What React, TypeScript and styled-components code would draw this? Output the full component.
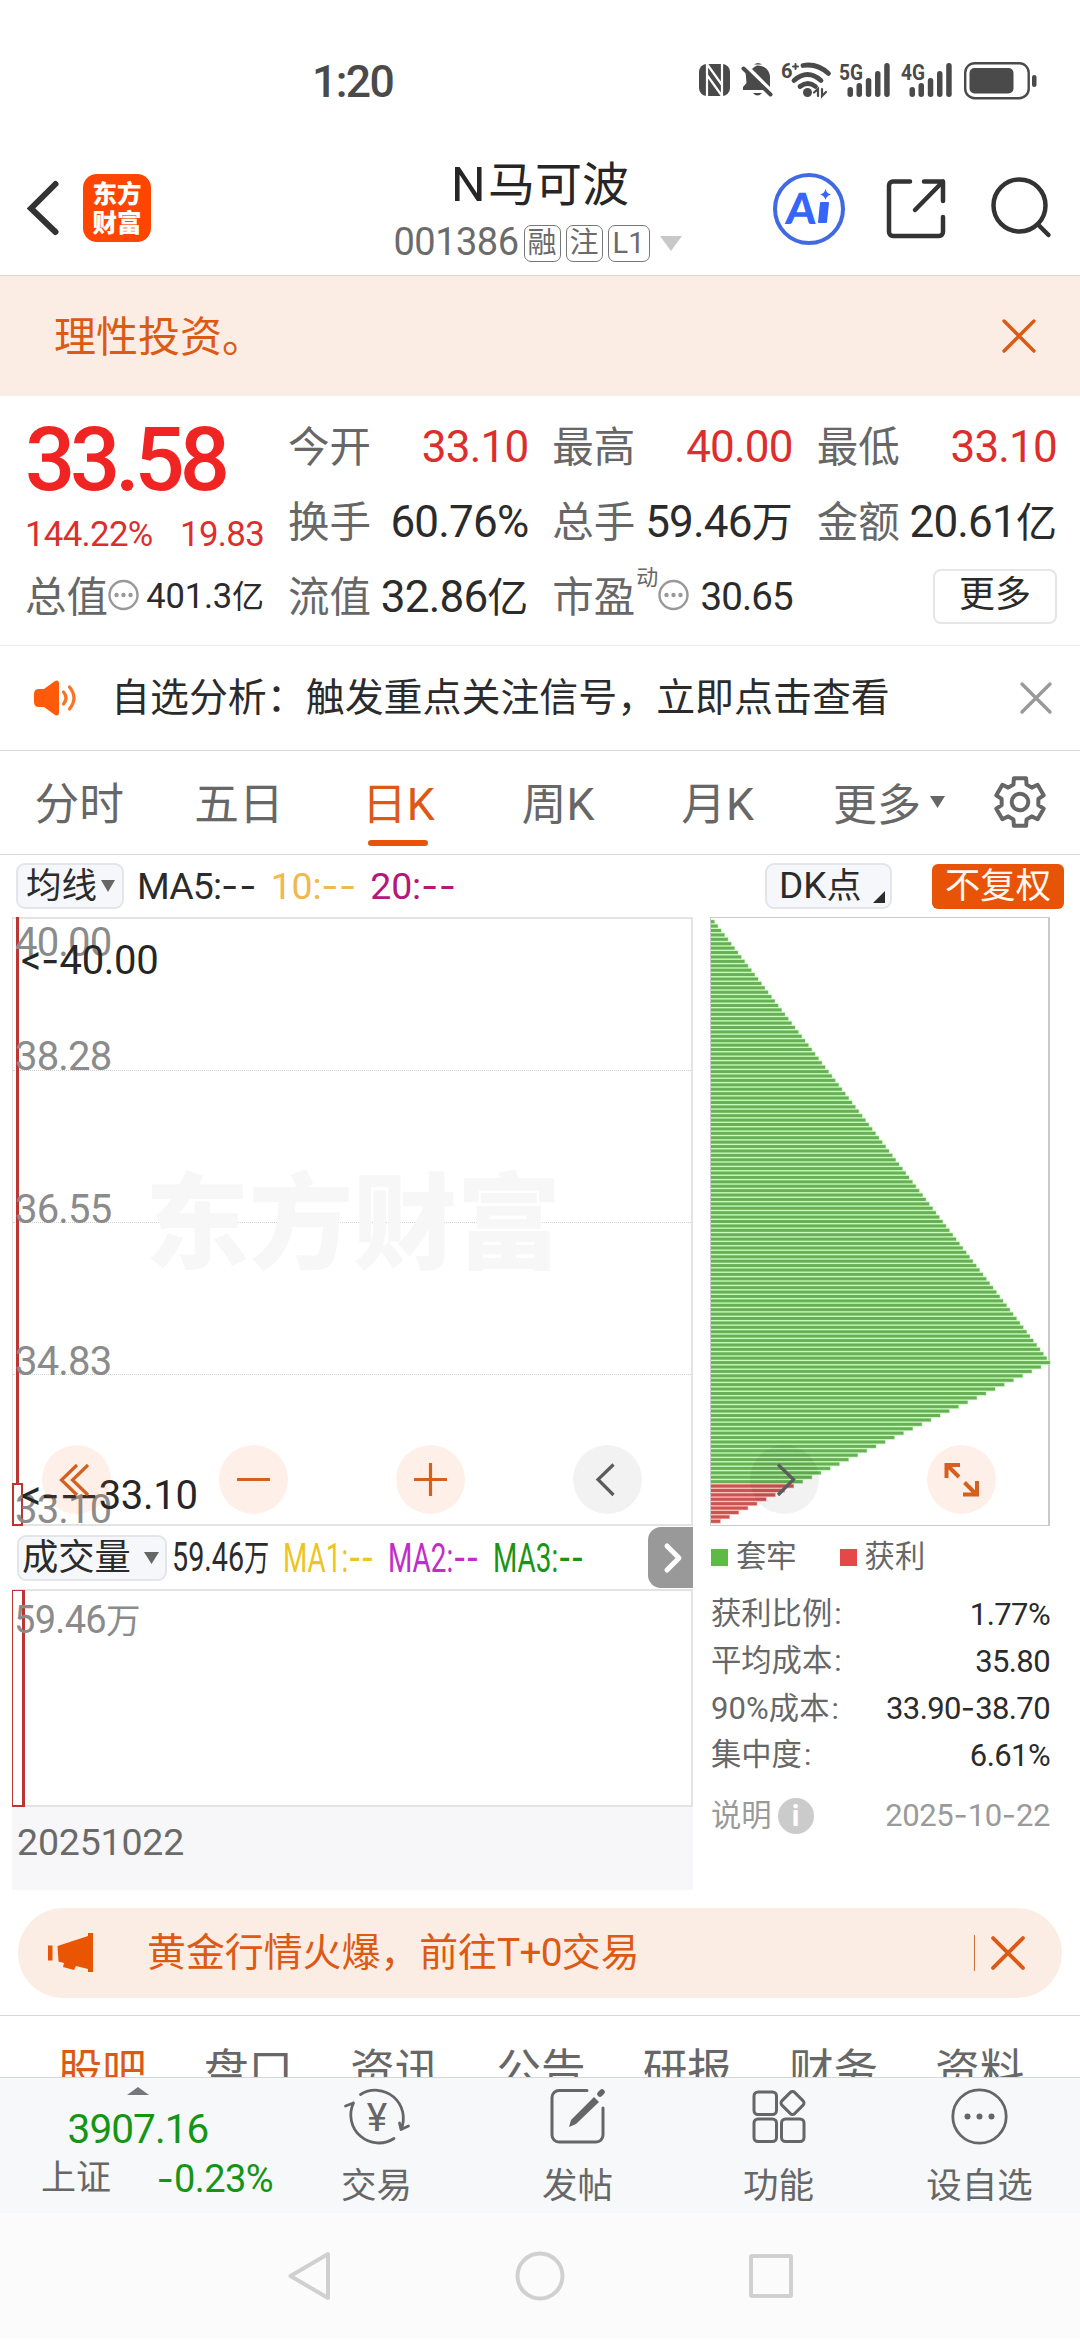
import React from "react";
import styled, { createGlobalStyle, css } from "styled-components";

const GlobalStyle = createGlobalStyle`
  * { box-sizing: border-box; }
  body {
    margin: 0;
    background: #fff;
    font-family: Roboto, "Noto Sans CJK SC", sans-serif;
    -webkit-font-smoothing: antialiased;
  }
  svg { display: block; flex: none; overflow: visible; }
`;

const c = {
  ink: "#2b2b2b",
  label: "#676767",
  red: "#dc2f2d",
  orange: "#dc5a14",
  green: "#149514",
  rule: "#d6d7d9",
  tint: "#fcede4",
};

/* ---------- primitives ---------- */

const Text = styled.span<{ $size: number; $color?: string; $ls?: number; $weight?: number; $ml?: number }>`
  font-size: ${(p) => p.$size}px;
  line-height: 1.2;
  color: ${(p) => p.$color ?? "inherit"};
  letter-spacing: ${(p) => p.$ls ?? 0}px;
  font-weight: ${(p) => p.$weight ?? 400};
  margin-left: ${(p) => p.$ml ?? 0}px;
  white-space: nowrap;
`;

const Dash = styled.span<{ $ls?: number }>`
  font-family: Inter, sans-serif;
  letter-spacing: ${(p) => p.$ls ?? 0}px;
`;

const Unit = styled.span<{ $size: number }>`
  font-size: ${(p) => p.$size}px;
  letter-spacing: 0;
`;

const Tight = styled.span<{ $ls: number }>`
  letter-spacing: ${(p) => p.$ls}px;
`;

const Page = styled.div`
  width: 1080px;
  height: 2340px;
  display: flex;
  flex-direction: column;
  overflow: hidden;
  background: #fff;
`;

/* ---------- status bar ---------- */

const StatusBar = styled.div`
  height: 132px;
  display: flex;
  align-items: flex-start;
  justify-content: space-between;
  padding: 56px 43px 0 312px;
  color: #4a4a4a;
`;

const StatusIcons = styled.div`
  display: flex;
  padding-top: 5px;
`;

/* ---------- header ---------- */

const Header = styled.header`
  height: 144px;
  display: grid;
  grid-template-columns: 300px 1fr 300px;
  border-bottom: 1px solid ${c.rule};
`;

const HeaderLeft = styled.div`
  display: flex;
  align-items: flex-start;
  padding: 42px 0 0 27px;
  gap: 23px;
`;

const BackButton = styled.div`
  padding-top: 6px;
`;

const Logo = styled.div`
  width: 68px;
  height: 68px;
  border-radius: 14px;
  background: #ff4500;
  color: #fff;
  font: 900 24.5px/29px "Noto Sans CJK SC", sans-serif;
  text-align: center;
  padding-top: 4px;
`;

const TitleBlock = styled.div`
  display: flex;
  flex-direction: column;
  align-items: center;
  padding-top: 24px;
`;

const Title = styled.div`
  height: 58px;
  line-height: 58px;
  font-size: 47px;
  color: #262626;
  white-space: nowrap;
`;

const CodeRow = styled.div`
  display: flex;
  align-items: center;
  height: 38px;
  margin-top: 10px;
  margin-right: 5px;
`;

const Badge = styled.span<{ $w: number }>`
  width: ${(p) => p.$w}px;
  height: 37px;
  margin-left: 5px;
  border: 1.5px solid #777;
  border-radius: 7px;
  color: #6b6b6b;
  font-size: 29px;
  line-height: 35px;
  text-align: center;
`;

const HeaderRight = styled.div`
  display: flex;
  justify-content: flex-end;
  padding: 41px 29px 0 0;
`;

const AiBadge = styled.div`
  flex: none;
  width: 72px;
  height: 72px;
  border: 4px solid #4169e1;
  border-radius: 50%;
  color: #3565fb;
  font: 900 43px/62px Lato, sans-serif;
  display: flex;
  padding-left: 9px;
  margin-right: 42px;
`;

const Slanted = styled.span<{ $deg: number }>`
  display: inline-block;
  transform: skewX(${(p) => p.$deg}deg);
`;

const IStem = styled.span`
  display: flex;
  flex-direction: column;
  align-items: center;
  width: 12px;
  margin: 12px 0 0 3px;
`;

const IBody = styled.i`
  width: 9px;
  height: 21px;
  margin: 2px 4px 0 0;
  border-radius: 1px;
  background: #3565fb;
  transform: skewX(-6deg);
`;

/* ---------- notices ---------- */

const RiskNotice = styled.div`
  height: 120px;
  display: flex;
  align-items: center;
  justify-content: space-between;
  padding: 0 45px 0 54px;
  background: ${c.tint};
`;

const RiskText = styled.span`
  padding-top: 3px;
  font-size: 42px;
  line-height: 50px;
  color: ${c.orange};
`;

const AnalysisNotice = styled.div`
  height: 105px;
  display: flex;
  align-items: center;
  padding: 0 29px 0 33px;
  border-bottom: 1px solid ${c.rule};
`;

const Grow = styled.div<{ $ml?: number }>`
  flex: 1;
  display: flex;
  margin-left: ${(p) => p.$ml ?? 0}px;
`;

/* ---------- quote ---------- */

const Quote = styled.section`
  height: 250px;
  display: grid;
  grid-template-columns: 239px 1fr;
  column-gap: 24px;
  padding: 13px 23px 0 25px;
  border-bottom: 1px solid #ececec;
`;

const QuoteLeft = styled.div`
  display: flex;
  flex-direction: column;
`;

const Price = styled.div`
  height: 98px;
  font-size: 88.5px;
  line-height: 102px;
  font-weight: 500;
  letter-spacing: -5.2px;
  color: #f12424;
  white-space: nowrap;
`;

const Change = styled.div`
  height: 52px;
  display: flex;
  align-items: center;
  justify-content: space-between;
  padding-top: 3px;
  color: ${c.red};
`;

const QuoteGrid = styled.div`
  display: grid;
  grid-template-columns: repeat(3, 1fr);
  grid-auto-rows: 75px;
  column-gap: 24px;
`;

const Cell = styled.div`
  height: 75px;
  display: flex;
  align-items: center;
  justify-content: space-between;
  padding-top: 1px;
`;

const CellLabel = styled.span`
  display: flex;
  align-items: center;
  padding-top: 2px;
  font-size: 41.5px;
  line-height: 72px;
  color: ${c.label};
  white-space: nowrap;
`;

const Sup = styled.span`
  font-size: 22px;
  line-height: 22px;
  margin: -40px 0 0 1px;
`;

const MoreButton = styled.button`
  width: 124px;
  height: 55px;
  margin: -2px 0 0 auto;
  padding: 0 0 2px;
  border: 2px solid #e6e6e6;
  border-radius: 8px;
  background: #fff;
  font: 36px/44px Roboto, "Noto Sans CJK SC", sans-serif;
  color: ${c.ink};
`;

/* ---------- period tabs ---------- */

const PeriodTabs = styled.nav`
  height: 104px;
  display: flex;
  border-bottom: 1px solid ${c.rule};
`;

const PeriodTab = styled.div<{ $active?: boolean }>`
  width: 159.6px;
  display: flex;
  flex-direction: column;
  align-items: center;
  padding: 22px 1px 0 0;
  font-size: 44.7px;
  line-height: 64px;
  color: ${(p) => (p.$active ? c.orange : c.label)};
  white-space: nowrap;
  ${(p) =>
    p.$active &&
    css`
      &::after {
        content: "";
        width: 60px;
        height: 6px;
        margin-top: 3px;
        border-radius: 3px;
        background: #e85407;
      }
    `}
`;

const MoreTab = styled.div`
  display: flex;
  align-items: center;
  gap: 9px;
  height: 102px;
  padding-left: 35px;
  font-size: 44px;
  color: ${c.label};
`;

const GearSlot = styled.div`
  margin: 25px 0 0 49px;
`;

/* ---------- indicator bars ---------- */

const IndicatorBar = styled.div`
  height: 62px;
  display: flex;
  align-items: center;
  padding: 0 16px;
  color: ${c.ink};
`;

const Pill = styled.div<{ $w: number; $pl: number }>`
  width: ${(p) => p.$w}px;
  height: 46px;
  flex: none;
  display: flex;
  align-items: center;
  padding-left: ${(p) => p.$pl}px;
  border: 2px solid #e2e5ea;
  border-radius: 9px;
  background: #f6f7fa;
  color: ${c.ink};
`;

const SolidPill = styled.div`
  width: 132px;
  height: 45px;
  margin-left: 40px;
  border-radius: 6px;
  background: #e85407;
  color: #fff8f2;
  font-size: 35.3px;
  line-height: 45px;
  text-align: center;
`;

/* ---------- charts ---------- */

const Charts = styled.section`
  position: relative;
  height: 973px;
  display: flex;
  padding-left: 12px;
  gap: 17px;
`;

const ChartColumn = styled.div`
  width: 681px;
  display: flex;
  flex-direction: column;
`;

const CandleChart = styled.div`
  position: relative;
  height: 609px;
  flex: none;
  border: 2px solid #e3e3e3;
  border-left-width: 1px;
`;

const AxisLabel = styled.span<{ $y: number; $x?: number; $dark?: boolean }>`
  position: absolute;
  left: ${(p) => p.$x ?? 2}px;
  top: ${(p) => p.$y}px;
  font-size: 40px;
  line-height: 48px;
  letter-spacing: ${(p) => (p.$dark ? -0.3 : -0.8)}px;
  color: ${(p) => (p.$dark ? "#262626" : "#8b8b8b")};
  white-space: nowrap;
`;

const GridLine = styled.div<{ $y: number }>`
  position: absolute;
  left: 0;
  right: 0;
  top: ${(p) => p.$y}px;
  border-top: 1px dotted #d2d2d2;
`;

const Watermark = styled.div`
  position: absolute;
  left: 132px;
  top: 222px;
  font: 900 104px/150px "Noto Sans CJK SC", sans-serif;
  color: #f7f7f7;
  white-space: nowrap;
`;

const Wick = styled.div`
  position: absolute;
  left: 3px;
  top: -2px;
  width: 2.5px;
  height: 567px;
  background: #bd3531;
`;

const CandleBody = styled.div`
  position: absolute;
  left: -1px;
  bottom: -2px;
  width: 11px;
  height: 43px;
  border: 2px solid #bd3531;
`;

const VolumeBar = styled.div`
  height: 63px;
  flex: none;
  display: flex;
  align-items: center;
  padding-left: 5px;
`;

const Narrow = styled.div<{ $w: number; $ml: number; $color: string; $scale?: number }>`
  width: ${(p) => p.$w}px;
  margin-left: ${(p) => p.$ml}px;
  font-size: 41px;
  line-height: 50px;
  color: ${(p) => p.$color};
  white-space: nowrap;
  transform: scaleX(${(p) => p.$scale ?? 0.68});
  transform-origin: left center;
`;

const Expander = styled.div`
  width: 45px;
  height: 61px;
  margin-left: auto;
  display: flex;
  align-items: center;
  padding-left: 17px;
  border-radius: 13px 0 0 13px;
  background: #999;
`;

const VolumeChart = styled.div`
  position: relative;
  height: 218px;
  flex: none;
  border: 2px solid #e3e3e3;
  border-left-width: 1px;
`;

const VolumeColumn = styled.div`
  position: absolute;
  left: -1px;
  top: -1px;
  width: 13px;
  height: 217px;
  border: solid #bd3531;
  border-width: 1px 3px 2px 1.5px;
`;

const DateStrip = styled.div`
  height: 83px;
  padding: 13px 0 0 5px;
  background: #f7f7f9;
  color: #6a6a6a;
`;

const ChipColumn = styled.div`
  width: 340px;
  display: flex;
  flex-direction: column;
`;

const ChipChart = styled.div`
  height: 609px;
  border: 2px solid #cacaca;
  border-width: 1px 2px 1px 1px;
`;

const Legend = styled.div`
  display: flex;
  align-items: center;
  height: 60px;
  padding: 2px 0 0 1px;
  color: ${c.label};
`;

const Swatch = styled.i<{ $color: string; $ml?: number }>`
  width: 17px;
  height: 17px;
  margin: 0 8px 0 ${(p) => p.$ml ?? 0}px;
  background: ${(p) => p.$color};
`;

const StatRow = styled.div<{ $muted?: boolean }>`
  height: 47px;
  display: flex;
  align-items: center;
  justify-content: space-between;
  margin-top: ${(p) => (p.$muted ? 13 : 0)}px;
  padding-left: 1px;
  font-size: 30.3px;
  line-height: 36px;
  color: ${(p) => (p.$muted ? "#9a9a9a" : c.label)};
  white-space: nowrap;
`;

const InfoLabel = styled.span`
  display: flex;
  align-items: center;
  gap: 6px;
`;

const InfoDot = styled.span`
  width: 36px;
  height: 36px;
  border-radius: 50%;
  background: #cbcbcb;
  color: #fff;
  font: 700 29px/36px Roboto, sans-serif;
  text-align: center;
`;

const Stats = styled.div`
  padding-top: 5px;
`;

const ChartControls = styled.div`
  position: absolute;
  left: 42px;
  top: 528px;
  display: flex;
  gap: 108.1px;
`;

const RoundButton = styled.div<{ $grey?: boolean }>`
  width: 69px;
  height: 69px;
  border-radius: 50%;
  background: ${(p) => (p.$grey ? "rgba(0,0,0,0.05)" : "rgba(246,106,30,0.1)")};
`;

/* ---------- promo + sections ---------- */

const Promo = styled.div`
  height: 90px;
  margin: 18px 18px 17px;
  display: flex;
  align-items: center;
  padding: 0 38px 0 30px;
  border-radius: 45px;
  background: ${c.tint};
`;

const PromoDivider = styled.i`
  width: 1.5px;
  height: 36px;
  margin-right: 17px;
  background: #c9713f;
`;

const SectionTabs = styled.nav`
  height: 62px;
  display: flex;
  overflow: hidden;
  padding: 0 27px 0 29px;
  border-top: 1px solid ${c.rule};
`;

const SectionTab = styled.div<{ $active?: boolean }>`
  flex: 1;
  padding-top: 25px;
  font-size: 44.5px;
  line-height: 60px;
  text-align: center;
  white-space: nowrap;
  color: ${(p) => (p.$active ? c.orange : c.label)};
`;

/* ---------- bottom bars ---------- */

const BottomBar = styled.footer`
  height: 136px;
  display: flex;
  border-top: 1px solid ${c.rule};
  background: #f6f8fa;
`;

const IndexBlock = styled.div`
  width: 276px;
  display: flex;
  flex-direction: column;
  align-items: center;
  padding-top: 9px;
`;

const IndexValue = styled.div`
  margin-top: 10px;
  height: 50px;
  line-height: 49px;
  font-size: 40.5px;
  letter-spacing: -0.9px;
  color: ${c.green};
`;

const IndexRow = styled.div`
  width: 100%;
  display: flex;
  justify-content: space-between;
  align-items: center;
  height: 48px;
  padding: 0 3px 0 41px;
`;

const BottomItem = styled.div`
  flex: 1;
  display: flex;
  flex-direction: column;
  align-items: center;
  padding-top: 10px;
  gap: 17px;
  color: ${c.label};
`;

const SystemNav = styled.div`
  height: 126px;
  display: flex;
  justify-content: center;
  align-items: center;
  gap: 184px;
  background: #fbfbfb;
`;

/* ---------- icons ---------- */

const S = "#4a4a4a";

const Signal = ({ label }: { label: string }) => (
  <svg width="51" height="36" viewBox="0 0 51 36" fill={S}>
    <text x="-1" y="19" fontSize="22.500" fontWeight="700" textLength="24" lengthAdjust="spacingAndGlyphs">
      {label}
    </text>
    <rect x="7.500" y="26" width="5.500" height="10" rx="2.700" />
    <rect x="16.500" y="22" width="5.500" height="14" rx="2.700" />
    <rect x="25.800" y="17" width="5.500" height="19" rx="2.700" />
    <rect x="35" y="10" width="5.500" height="26" rx="2.700" />
    <rect x="44.200" y="2" width="5.500" height="34" rx="2.700" />
  </svg>
);

const StatusGlyphs = () => (
  <StatusIcons>
    <svg width="43" height="37" viewBox="0 0 43 37">
      <rect x="0" y="3" width="31" height="32" rx="8" fill={S} />
      <path d="M8 35V3l15 21V9M23 3v32L8 14v15" fill="none" stroke="#fff" strokeWidth="2.200" />
    </svg>
    <svg width="39" height="37" viewBox="0 0 39 37">
      <path d="M15 4.500a12 12 0 0 1 13 11V26l-18-18a11 11 0 0 1 5-3.500z" fill={S} />
      <path d="M3.500 10.500L22 29H1v-3l3.500-4z" fill={S} />
      <path d="M12 3.500q4-3 8 0z" fill={S} />
      <path d="M1.500 7.500l27 26" stroke={S} strokeWidth="4" strokeLinecap="round" />
      <path d="M11 32h9q-4.500 5-9 0z" fill={S} />
    </svg>
    <svg width="59" height="37" viewBox="0 0 59 37" fill="none" stroke={S} strokeLinecap="round">
      <text x="0" y="17" fontSize="20" fontWeight="700" fill={S} stroke="none">6</text>
      <path d="M12 5.500h5M14.500 3v5" strokeWidth="2" />
      <path d="M22 4.500q14-2.500 25.500 8M13 19.500q13.500-12 27 0M19 25.500q8-6 15.500 0" strokeWidth="4.800" />
      <circle cx="26.500" cy="31.500" r="4.500" fill={S} stroke="none" />
      <path d="M37 35v-7l-4 3.500M41 28v7l4-4" strokeWidth="2.200" />
    </svg>
    <Signal label="5G" />
    <svg width="11" height="1" />
    <Signal label="4G" />
    <svg width="11" height="1" />
    <svg width="73" height="40" viewBox="0 0 73 40">
      <rect x="1.200" y="2.200" width="63.500" height="35" rx="9.500" fill="none" stroke={S} strokeWidth="2.400" />
      <rect x="5.500" y="7" width="44" height="25.500" rx="5" fill={S} />
      <rect x="68" y="14" width="4.500" height="12" rx="2.200" fill={S} />
    </svg>
  </StatusIcons>
);

const Cross = ({ size, color, width }: { size: number; color: string; width: number }) => (
  <svg width={size} height={size} viewBox="0 0 30 30" stroke={color} strokeWidth={width} strokeLinecap="round">
    <path d="M1 1L29 29M29 1L1 29" />
  </svg>
);

const Down = ({ w, h, color = "#666" }: { w: number; h: number; color?: string }) => (
  <svg width={w} height={h} viewBox="0 0 10 10" preserveAspectRatio="none">
    <path d="M0 0h10L5 10z" fill={color} />
  </svg>
);

const Dots = () => (
  <svg width="31" height="31" viewBox="0 0 31 31">
    <circle cx="15.500" cy="12" r="14" fill="none" stroke="#999" strokeWidth="2.400" />
    <g fill="#999">
      <circle cx="8.500" cy="12" r="2.200" />
      <circle cx="15.500" cy="12" r="2.200" />
      <circle cx="22.500" cy="12" r="2.200" />
    </g>
  </svg>
);

const gearPath = (() => {
  const pts: string[] = [];
  for (let i = 0; i < 6; i++) {
    const a = (i * 60 - 90) * (Math.PI / 180);
    [
      [-0.36, 18.6],
      [-0.25, 24.6],
      [0.25, 24.6],
      [0.36, 18.6],
    ].forEach(([d, r]) => {
      pts.push(`${(26 + r * Math.cos(a + d)).toFixed(2)} ${(26 + r * Math.sin(a + d)).toFixed(2)}`);
    });
  }
  return `M${pts.join("L")}Z`;
})();

const Gear = () => (
  <svg width="52" height="52" viewBox="0 0 52 52" fill="none" stroke="#666" strokeWidth="4" strokeLinejoin="round">
    <path d={gearPath} />
    <circle cx="26" cy="26" r="8.300" />
  </svg>
);

/* Chip distribution: green rows are trapped holders, red rows are in profit. */
const ROWS = 137;
const PEAK = 100;
const FIRST_RED = 128;
const PITCH = 4.409;
const chipWidth = (i: number) =>
  i <= PEAK ? ((i + 1) * 339) / (PEAK + 1) : ((ROWS - i) * 339) / (ROWS - PEAK);

const ChipBars = () => (
  <svg width="338" height="607" viewBox="0 0 338 607">
    {Array.from({ length: ROWS }, (_, i) => {
      const y = 3.7 + i * PITCH;
      const w = chipWidth(i);
      const red = i >= FIRST_RED;
      return (
        <g key={i}>
          <rect x="0" y={y - 2.2} width={w + 0.6} height={PITCH} fill={red ? "#ffb3ae" : "#bdfcae"} />
          <rect x="0" y={y - 1.5} width={w} height="3" fill={red ? "#c95452" : "#68af57"} />
        </g>
      );
    })}
  </svg>
);

const controls: { grey?: boolean; icon: React.ReactNode }[] = [
  { icon: <path d="M35 20L19.500 35L35 50M46 20L30.500 35L46 50" /> },
  { icon: <path d="M18 34.500H51" /> },
  { icon: <path d="M18 34.500H51M34.500 18V51" /> },
  { grey: true, icon: <path d="M40.500 19.500L25 34.500L40.500 50" /> },
  { grey: true, icon: <path d="M28 19.500L43.500 34.500L28 50" /> },
  { icon: <path d="M19.500 33V20H33M21 21L32 32M50 36V49.500H36M48.500 48.500L37.500 37.500" strokeWidth="4" /> },
];

const quoteCells = [
  { label: "今开", value: "33.10", red: true },
  { label: "最高", value: "40.00", red: true },
  { label: "最低", value: "33.10", red: true },
  { label: "换手", value: "60.76%" },
  { label: "总手", value: "59.46", unit: "万" },
  { label: "金额", value: "20.61", unit: "亿" },
  { label: "流值", value: "32.86", unit: "亿" },
];

export default function App() {
  return (
    <>
      <GlobalStyle />
      <Page>
        <StatusBar>
          <Text $size={44.5} $weight={500} $ls={-1.6}>1:20</Text>
          <StatusGlyphs />
        </StatusBar>

        <Header>
          <HeaderLeft>
            <BackButton>
              <svg width="33" height="56" viewBox="0 0 33 56" fill="none" stroke="#333" strokeWidth="6" strokeLinecap="round">
                <path d="M28.500 4L4 28.500L28.500 52" />
              </svg>
            </BackButton>
            <Logo>东方<br />财富</Logo>
          </HeaderLeft>
          <TitleBlock>
            <Title><Text $size={48.5} $ls={2.5}>N</Text>马可波</Title>
            <CodeRow>
              <Text $size={38} $ls={-0.5} $color="#6b6b6b">001386</Text>
              <Badge $w={37}>融</Badge>
              <Badge $w={37}>注</Badge>
              <Badge $w={42}>L1</Badge>
              <svg width="32" height="15" viewBox="0 0 32 15"><path d="M10 0h22L21 15z" fill="#c8c8c8" /></svg>
            </CodeRow>
          </TitleBlock>
          <HeaderRight>
            <AiBadge>
              <Slanted $deg={-4}>A</Slanted>
              <IStem>
                <svg width="11" height="11" viewBox="0 0 11 11" fill="#3565fb">
                  <path d="M5.500 0Q6.500 4.500 11 5.500Q6.500 6.500 5.500 11Q4.500 6.500 0 5.500Q4.500 4.500 5.500 0z" />
                </svg>
                <IBody />
              </IStem>
            </AiBadge>
            <svg width="104" height="72" viewBox="0 0 104 72" fill="none" stroke="#333" strokeWidth="4.500" strokeLinecap="round" strokeLinejoin="round">
              <path d="M23 8.500H6a4 4 0 0 0-4 4V59a4 4 0 0 0 4 4H52a4 4 0 0 0 4-4V44" />
              <path d="M37 8.500H56V28M56 8.500L28 37" />
            </svg>
            <svg width="60" height="72" viewBox="0 0 60 72" fill="none" stroke="#333" strokeWidth="4.500" strokeLinecap="round">
              <circle cx="28.500" cy="32.500" r="26" />
              <path d="M47 51.500L57.500 62" />
            </svg>
          </HeaderRight>
        </Header>

        <RiskNotice>
          <RiskText>理性投资。</RiskText>
          <Cross size={32} color={c.orange} width={3.2} />
        </RiskNotice>

        <Quote>
          <QuoteLeft>
            <Price>33.58</Price>
            <Change>
              <Text $size={34.8} $ls={-0.7}>144.22%</Text>
              <Text $size={34.8} $ls={-0.7}>19.83</Text>
            </Change>
            <Cell>
              <CellLabel>总值<Dots /></CellLabel>
              <Text $size={34.5} $color={c.ink} $ls={-0.2}>401.3<Unit $size={32}>亿</Unit></Text>
            </Cell>
          </QuoteLeft>
          <QuoteGrid>
            {quoteCells.map((q) => (
              <Cell key={q.label}>
                <CellLabel>{q.label}</CellLabel>
                <Text $size={44} $color={q.red ? c.red : c.ink} $ls={-0.8}>
                  {q.value}
                  {q.unit && <Unit $size={41}>{q.unit}</Unit>}
                </Text>
              </Cell>
            ))}
            <Cell>
              <CellLabel>市盈<Sup>动</Sup><Dots /></CellLabel>
              <Text $size={38.5} $color={c.ink} $ls={-0.9}>30.65</Text>
            </Cell>
            <Cell>
              <MoreButton>更多</MoreButton>
            </Cell>
          </QuoteGrid>
        </Quote>

        <AnalysisNotice>
          <svg width="44" height="36" viewBox="0 0 44 36">
            <path d="M6 9h5L22 1q4-2 4 3v28q0 5-4 3L11 27H6q-5 0-5-5v-8q0-5 5-5z" fill="#ff5a0a" />
            <path d="M30.500 12q5 6 0 12M36.500 7q9 11 0 22" fill="none" stroke="#f97327" strokeWidth="3.200" strokeLinecap="round" />
          </svg>
          <Grow $ml={34}>
            <Text $size={38.95} $color={c.ink}>自选分析：触发重点关注信号，立即点击查看</Text>
          </Grow>
          <Cross size={30} color="#999" width={3.4} />
        </AnalysisNotice>

        <PeriodTabs>
          <PeriodTab>分时</PeriodTab>
          <PeriodTab>五日</PeriodTab>
          <PeriodTab $active>日K</PeriodTab>
          <PeriodTab>周K</PeriodTab>
          <PeriodTab>月K</PeriodTab>
          <MoreTab>更多<Down w={15} h={12} /></MoreTab>
          <GearSlot><Gear /></GearSlot>
        </PeriodTabs>

        <IndicatorBar>
          <Pill $w={108} $pl={8}>
            <Text $size={35.5}>均线</Text>
            <svg width="4" height="1" />
            <Down w={14} h={12} />
          </Pill>
          <Grow $ml={13}>
            <Text $size={37.5} $ls={-0.9}>MA5:<Dash $ls={0.8}>--</Dash></Text>
            <Text $size={37.5} $ml={13.5} $color="#f0b84e" $ls={-0.2}>10:<Dash $ls={0.5}>--</Dash></Text>
            <Text $size={37.5} $ml={13.5} $color="#b5177c" $ls={-0.2}>20:<Dash $ls={0.5}>--</Dash></Text>
          </Grow>
          <Pill $w={127} $pl={12}>
            <Text $size={37}>DK<Unit $size={35}>点</Unit></Text>
            <svg width="24" height="12" viewBox="0 0 24 12"><path d="M23 11V23H11z" fill={c.ink} /></svg>
          </Pill>
          <SolidPill>不复权</SolidPill>
        </IndicatorBar>

        <Charts>
          <ChartColumn>
            <CandleChart>
              <GridLine $y={151} />
              <GridLine $y={303} />
              <GridLine $y={455} />
              <Watermark>东方财富</Watermark>
              <Wick />
              <CandleBody />
              <AxisLabel $y={0}>40.00</AxisLabel>
              <AxisLabel $y={114}>38.28</AxisLabel>
              <AxisLabel $y={267}>36.55</AxisLabel>
              <AxisLabel $y={419}>34.83</AxisLabel>
              <AxisLabel $y={567}>33.10</AxisLabel>
              <AxisLabel $dark $x={8} $y={17}>&lt;<Dash>-</Dash>40.00</AxisLabel>
              <AxisLabel $dark $x={8} $y={552}>&lt;<Dash $ls={0.8}>---</Dash>33.10</AxisLabel>
            </CandleChart>
            <VolumeBar>
              <Pill $w={150} $pl={3}>
                <Text $size={36.3}>成交量</Text>
                <svg width="13" height="1" />
                <Down w={15} h={12} />
              </Pill>
              <Narrow $w={95} $ml={5} $color={c.ink} $scale={0.7}>59.46<Unit $size={36}>万</Unit></Narrow>
              <Narrow $w={89} $ml={16} $color="#edc51f">MA1:<Dash>--</Dash></Narrow>
              <Narrow $w={89} $ml={16} $color="#c22cc8">MA2:<Dash>--</Dash></Narrow>
              <Narrow $w={89} $ml={16} $color="#1a9414">MA3:<Dash>--</Dash></Narrow>
              <Expander>
                <svg width="17" height="28" viewBox="0 0 17 28" fill="none" stroke="#fff" strokeWidth="5" strokeLinecap="round" strokeLinejoin="round">
                  <path d="M2 2L14 14L2 26" />
                </svg>
              </Expander>
            </VolumeBar>
            <VolumeChart>
              <VolumeColumn />
              <AxisLabel $x={1} $y={5}><Text $size={38} $ls={-0.7}>59.46</Text><Unit $size={34.5}>万</Unit></AxisLabel>
            </VolumeChart>
            <DateStrip>
              <Text $size={37.5} $ls={-0.2}>20251022</Text>
            </DateStrip>
          </ChartColumn>

          <ChipColumn>
            <ChipChart>
              <ChipBars />
            </ChipChart>
            <Legend>
              <Swatch $color="#5cba45" />
              <Text $size={30.3}>套牢</Text>
              <Swatch $color="#e64849" $ml={43} />
              <Text $size={30.3}>获利</Text>
            </Legend>
            <Stats>
              <StatRow><span>获利比例<Text $size={30.3} $ml={2}>:</Text></span><Text $size={31} $color={c.ink} $ls={-0.6}>1.77%</Text></StatRow>
              <StatRow><span>平均成本<Text $size={30.3} $ml={2}>:</Text></span><Text $size={31} $color={c.ink} $ls={-0.6}>35.80</Text></StatRow>
              <StatRow><span><Text $size={31} $ls={0.1}>90%</Text>成本<Text $size={30.3} $ml={2}>:</Text></span><Text $size={31} $color={c.ink} $ls={-0.6}>33.90<Dash>-</Dash>38.70</Text></StatRow>
              <StatRow><span>集中度<Text $size={30.3} $ml={2}>:</Text></span><Text $size={31} $color={c.ink} $ls={-0.6}>6.61%</Text></StatRow>
              <StatRow $muted>
                <InfoLabel>说明<InfoDot>i</InfoDot></InfoLabel>
                <Text $size={31} $ls={-0.4}>2025<Dash>-</Dash>10<Dash>-</Dash>22</Text>
              </StatRow>
            </Stats>
          </ChipColumn>

          <ChartControls>
            {controls.map((b, i) => (
              <RoundButton key={i} $grey={b.grey}>
                <svg width="69" height="69" viewBox="0 0 69 69" fill="none" stroke={b.grey ? "#5c5c5c" : "#d4601f"} strokeWidth="3.200">
                  {b.icon}
                </svg>
              </RoundButton>
            ))}
          </ChartControls>
        </Charts>

        <Promo>
          <svg width="46" height="40" viewBox="0 0 46 40" fill="#ea5504">
            <path d="M0 12.500h4.500v15H0zM9.500 13L40 3V0h5v39h-5v-3l-12-3-2 4-11-3 1-4-5.500-1.500z" />
          </svg>
          <Grow $ml={53}>
            <Text $size={38.9} $color={c.orange}>黄金行情火爆，前往<Tight $ls={-0.8}>T+0</Tight>交易</Text>
          </Grow>
          <PromoDivider />
          <Cross size={32} color={c.orange} width={3.6} />
        </Promo>

        <SectionTabs>
          {["股吧", "盘口", "资讯", "公告", "研报", "财务", "资料"].map((t, i) => (
            <SectionTab key={t} $active={i === 0}>{t}</SectionTab>
          ))}
        </SectionTabs>

        <BottomBar>
          <IndexBlock>
            <svg width="22" height="8" viewBox="0 0 22 8"><path d="M11 0L22 8H0z" fill="#75777b" /></svg>
            <IndexValue>3907.16</IndexValue>
            <IndexRow>
              <Text $size={35} $color={c.label}>上证</Text>
              <Text $size={38} $color={c.green} $ls={-0.6}><Dash>-</Dash>0.23%</Text>
            </IndexRow>
          </IndexBlock>
          <BottomItem>
            <svg width="66" height="60" viewBox="0 0 66 60" fill="none" stroke="#666" strokeWidth="2.800" strokeLinecap="round">
              <path d="M16.500 6.500A28 28 0 0 1 57 41.500M1.500 18L9.500 15M9.500 15A28 28 0 0 0 50 50.500M57 41.500l7.500-3.500M57 41.500L55.500 35" />
              <text x="33" y="43" fontSize="39" fill="#666" stroke="none" textAnchor="middle">¥</text>
            </svg>
            <Text $size={35.5}>交易</Text>
          </BottomItem>
          <BottomItem>
            <svg width="56" height="60" viewBox="0 0 56 60" fill="none" stroke="#666" strokeWidth="3" strokeLinecap="round">
              <path d="M37 2.500H9a7 7 0 0 0-7 7V47a7 7 0 0 0 7 7H46a7 7 0 0 0 7-7V20" />
              <path d="M50 6l2-2" strokeWidth="5.500" />
              <path d="M44 9l5 5L26 36l-7 3 2-7z" fill="#666" stroke="none" />
            </svg>
            <Text $size={35.5}>发帖</Text>
          </BottomItem>
          <BottomItem>
            <svg width="54" height="60" viewBox="0 0 54 60" fill="none" stroke="#666" strokeWidth="3">
              <rect x="2" y="4" width="22.500" height="22.500" rx="4" />
              <rect x="2" y="31" width="22.500" height="22.500" rx="4" />
              <rect x="29.500" y="31" width="22.500" height="22.500" rx="4" />
              <rect x="31.500" y="6" width="18" height="18" rx="3" transform="rotate(45 40.500 15)" />
            </svg>
            <Text $size={35.5}>功能</Text>
          </BottomItem>
          <BottomItem>
            <svg width="57" height="60" viewBox="0 0 57 60">
              <circle cx="28.500" cy="28.500" r="26.700" fill="none" stroke="#666" strokeWidth="2.800" />
              <g fill="#666">
                <circle cx="16.500" cy="28.500" r="3" />
                <circle cx="28.500" cy="28.500" r="3" />
                <circle cx="40.500" cy="28.500" r="3" />
              </g>
            </svg>
            <Text $size={35.5}>设自选</Text>
          </BottomItem>
        </BottomBar>

        <SystemNav>
          <svg width="44" height="50" viewBox="0 0 44 50" fill="none" stroke="#d0d0d0" strokeWidth="4" strokeLinejoin="round">
            <path d="M41 3V47L3.500 25z" />
          </svg>
          <svg width="50" height="50" viewBox="0 0 50 50" fill="none" stroke="#d0d0d0" strokeWidth="4">
            <circle cx="25" cy="25" r="22.500" />
          </svg>
          <svg width="44" height="50" viewBox="0 0 44 50" fill="none" stroke="#d0d0d0" strokeWidth="4" strokeLinejoin="round">
            <rect x="2" y="5" width="40" height="40" rx="1" />
          </svg>
        </SystemNav>
      </Page>
    </>
  );
}
